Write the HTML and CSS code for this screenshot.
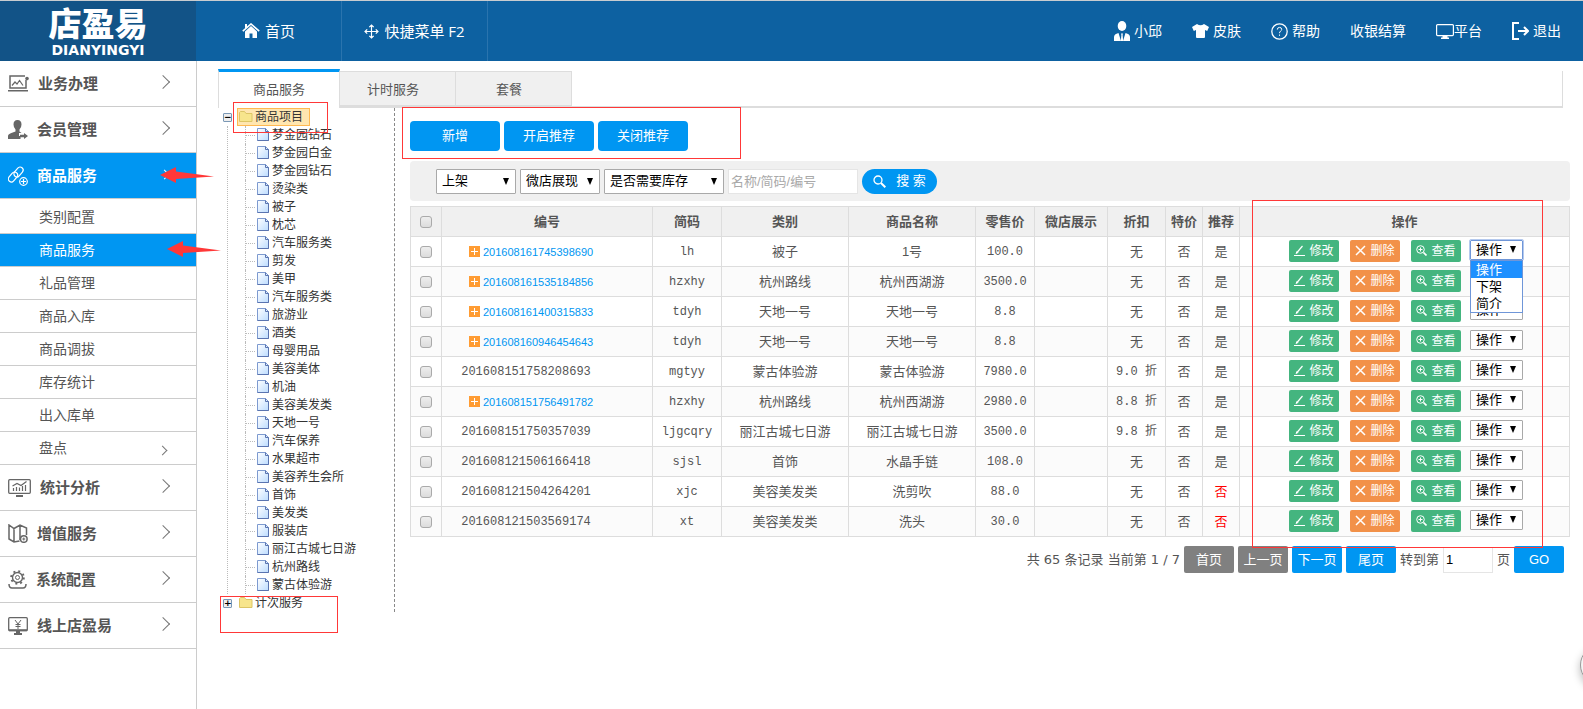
FILE: index.html
```html
<!DOCTYPE html>
<html lang="zh-CN">
<head>
  <meta charset="utf-8">
  <title>店盈易</title>
  <link rel="stylesheet" href="styles.css">
</head>
<body>
  <header class="header">
    <a href="#" class="logo">
      <span class="logo-name">店盈易</span>
      <span class="logo-pinyin">DIANYINGYI</span>
    </a>
    <nav class="nav">
      <a href="#">
        <svg width="18" height="16" viewBox="0 0 18 16"><path d="M9 3 3 8.500V15h4.500v-4.500h3V15H15V8.500z" fill="#fff"/><path d="M.8 8.200 9 1l8.200 7.200" fill="none" stroke="#fff" stroke-width="1.600"/><path d="M3 1h2v3L3 5.500z" fill="#fff"/></svg>
        首页
      </a>
      <a href="#">
        <svg width="15" height="15" viewBox="0 0 15 15" fill="none" stroke="#fff" stroke-width="1.200"><path d="M7.500 1v13M1 7.500h13M5.300 3.200l2.200-2.200 2.200 2.200M5.300 11.800l2.200 2.200 2.200-2.200M3.200 5.300 1 7.500l2.200 2.200M11.800 5.300 14 7.500l-2.200 2.200"/></svg>
        快捷菜单 F2
      </a>
    </nav>
    <nav class="user-nav">
      <a href="#">
        <svg width="16" height="20" viewBox="0 0 16 20" fill="#fff"><ellipse cx="8" cy="5" rx="4.300" ry="5"/><path d="M0 20v-4q0-3 4.500-4L7 20zM16 20v-4q0-3-4.500-4L9 20z"/><path d="M7 12.500h2l-.4 1.500.6 6H6.800l.6-6z"/></svg>
        小邱
      </a>
      <a href="#">
        <svg width="17" height="14" viewBox="0 0 17 14"><path d="M5 0q3.500 2.500 7 0l5 3-1.800 4-2.200-1v7q0 1-1 1H5q-1 0-1-1V6L1.800 7 0 3z" fill="#fff"/></svg>
        皮肤
      </a>
      <a href="#">
        <svg width="17" height="17" viewBox="0 0 17 17" fill="none" stroke="#fff" stroke-width="1.300"><circle cx="8.500" cy="8.500" r="7.700"/><path d="M6.300 6.600q0-2.200 2.200-2.200t2.200 2q0 1-1.200 1.800-1 .7-1 2M8.500 11.500v1.300" stroke-width="1"/></svg>
        帮助
      </a>
      <a href="#">收银结算</a>
      <a href="#" class="tight">
        <svg width="18" height="15" viewBox="0 0 18 15"><rect x=".6" y=".6" width="16.800" height="11" rx="1" fill="none" stroke="#fff" stroke-width="1.200"/><path d="M6.500 12h5v1.500H13V15H5v-1.500h1.500z" fill="#fff"/></svg>
        平台
      </a>
      <a href="#">
        <svg width="17" height="18" viewBox="0 0 17 18" fill="none" stroke="#fff" stroke-width="2"><path d="M7 1H1v16h6M6 9h10M12 5l4 4-4 4"/></svg>
        退出
      </a>
    </nav>
  </header>

  <div class="page">
    <aside class="sidebar">
      <ul class="menu">
        <li>
          <a href="#">
            <svg width="21" height="17" viewBox="0 0 21 17" fill="none" stroke="#666" stroke-width="1.200"><path d="M17 1H2v12h16V5M0 15.700h20" stroke-width="1.500"/><path d="m4 10.500 3-3.500 2 2L11.500 5.500 15 10.500"/><circle cx="19" cy="3.500" r="1.200" fill="#666"/></svg>
            业务办理
          </a>
        </li>
        <li>
          <a href="#">
            <svg width="20" height="19" viewBox="0 0 20 19" fill="#666"><path d="M9.500 0q4 0 4 4.500 0 3-2 5v2l2 1.500H11v3h1.500v3H0v-3q0-2 4-3.200l3.500-1.300v-2q-2-2-2-5 0-4.500 4-4.500z"/><path d="M12 14.800h4v-1.800l4 3-4 3v-1.800h-4z"/></svg>
            会员管理
          </a>
        </li>
        <li class="active">
          <a href="#">
            <svg width="20" height="20" viewBox="0 0 20 20" fill="none" stroke="#fff" stroke-width="1.200"><rect x="7.500" y=".5" width="6" height="11" rx="3" transform="rotate(40 10.500 6)"/><rect x="2" y="5.500" width="6" height="11" rx="3" transform="rotate(40 5 11)"/><circle cx="15.500" cy="15.500" r="3.800"/><path d="M15.500 13v5M13 15.500h5"/></svg>
            商品服务
          </a>
          <ul class="submenu">
            <li><a href="#">类别配置</a></li>
            <li class="current"><a href="#">商品服务</a></li>
            <li><a href="#">礼品管理</a></li>
            <li><a href="#">商品入库</a></li>
            <li><a href="#">商品调拔</a></li>
            <li><a href="#">库存统计</a></li>
            <li><a href="#">出入库单</a></li>
            <li class="has-more"><a href="#">盘点</a></li>
          </ul>
        </li>
        <li>
          <a href="#">
            <svg width="23" height="18" viewBox="0 0 23 18" fill="none" stroke="#666" stroke-width="1.300"><rect x=".7" y=".7" width="21.600" height="13.600" rx="1"/><path d="M5.500 12V9M8.500 12V8M11.500 12V8.500M14.500 12V7M17.500 12V6M4.500 7 9 4.500l4 2 5.500-4" stroke-width="1.200"/><path d="M8 17h7" stroke-width="2"/></svg>
            统计分析
          </a>
        </li>
        <li>
          <a href="#">
            <svg width="20" height="19" viewBox="0 0 20 19" fill="none" stroke="#666" stroke-width="1.500"><path d="M11.500 17 6 18 1 15V1l5 3.500L12 1l6.500 3v7M6 4.500V18M12 1v15"/><circle cx="15.800" cy="15" r="3.300"/><path d="M15.800 13.500v3M14.300 15h3" stroke-width="1"/></svg>
            增值服务
          </a>
        </li>
        <li>
          <a href="#">
            <svg width="19" height="19" viewBox="0 0 19 19" fill="none" stroke="#666"><circle cx="9.500" cy="7.500" r="5" stroke-width="1.400"/><circle cx="9.500" cy="7.500" r="6.400" stroke-width="1.800" stroke-dasharray="2 3.030"/><circle cx="9.500" cy="7.500" r="2"/><path d="M1 14q0 4 3 4h11q3 0 3-4" stroke-width="1.500"/></svg>
            系统配置
          </a>
        </li>
        <li>
          <a href="#">
            <svg width="20" height="18" viewBox="0 0 20 18" fill="none" stroke="#666" stroke-width="1.300"><rect x=".7" y=".7" width="18.600" height="13" rx="1"/><path d="M1 13.200h18" stroke-width="2"/><path d="m7 3 3 4 3-4M10 7v5M7.500 7.500h5M7.500 9.500h5" stroke-width="1"/><path d="M8 15h4M6 17h8" stroke-width="2"/></svg>
            线上店盈易
          </a>
        </li>
      </ul>
    </aside>

    <main class="main">
      <div class="tabs">
        <a href="#" class="tab active">商品服务</a>
        <a href="#" class="tab">计时服务</a>
        <a href="#" class="tab">套餐</a>
      </div>

      <div class="content">
        <div class="tree">
          <div class="mark mark-root"></div>
          <div class="node open"><span class="switch">−</span><a href="#" class="folder selected">商品项目</a></div>
          <ul class="leaves">
            <li><a href="#">梦金园钻石</a></li>
            <li><a href="#">梦金园白金</a></li>
            <li><a href="#">梦金园钻石</a></li>
            <li><a href="#">烫染类</a></li>
            <li><a href="#">被子</a></li>
            <li><a href="#">枕芯</a></li>
            <li><a href="#">汽车服务类</a></li>
            <li><a href="#">剪发</a></li>
            <li><a href="#">美甲</a></li>
            <li><a href="#">汽车服务类</a></li>
            <li><a href="#">旅游业</a></li>
            <li><a href="#">酒类</a></li>
            <li><a href="#">母婴用品</a></li>
            <li><a href="#">美容美体</a></li>
            <li><a href="#">机油</a></li>
            <li><a href="#">美容美发类</a></li>
            <li><a href="#">天地一号</a></li>
            <li><a href="#">汽车保养</a></li>
            <li><a href="#">水果超市</a></li>
            <li><a href="#">美容养生会所</a></li>
            <li><a href="#">首饰</a></li>
            <li><a href="#">美发类</a></li>
            <li><a href="#">服装店</a></li>
            <li><a href="#">丽江古城七日游</a></li>
            <li><a href="#">杭州路线</a></li>
            <li><a href="#">蒙古体验游</a></li>
          </ul>
          <div class="node"><span class="switch">+</span><a href="#" class="folder">计次服务</a>
            <div class="mark mark-second"></div>
          </div>
        </div>

        <div class="list">
          <div class="toolbar">
            <button class="btn">新增</button>
            <button class="btn">开启推荐</button>
            <button class="btn">关闭推荐</button>
            <div class="mark mark-toolbar"></div>
          </div>

          <form class="search" onsubmit="return false">
            <select class="select" aria-label="状态"><option>上架</option></select>
            <select class="select" aria-label="微店"><option>微店展现</option></select>
            <select class="select wide" aria-label="库存"><option>是否需要库存</option></select>
            <input type="text" class="keyword" placeholder="名称/简码/编号" aria-label="关键字">
            <button class="search-btn">
              <svg width="13" height="13" viewBox="0 0 13 13" fill="none" stroke="#fff"><circle cx="5" cy="5" r="4" stroke-width="1.300"/><path d="m8 8 4.300 4.300" stroke-width="2"/></svg>
              搜 索
            </button>
          </form>

          <div class="table-wrap">
            <table>
              <colgroup>
                <col class="c-check"><col class="c-code"><col class="c-short"><col class="c-name"><col class="c-name"><col class="c-price"><col class="c-shop"><col class="c-discount"><col class="c-flag"><col class="c-flag"><col>
              </colgroup>
              <thead>
                <tr><th><input type="checkbox" aria-label="全选"></th><th>编号</th><th>简码</th><th>类别</th><th>商品名称</th><th>零售价</th><th>微店展示</th><th>折扣</th><th>特价</th><th>推荐</th><th>操作</th></tr>
              </thead>
              <tbody>
                <tr>
                  <td><input type="checkbox" aria-label="选择"></td>
                  <td><a href="#" class="code">201608161745398690</a></td>
                  <td class="mono">lh</td><td>被子</td><td>1号</td><td class="mono">100.0</td><td></td><td>无</td><td>否</td><td>是</td>
                  <td>
                    <div class="actions">
                      <button class="act edit">修改</button><button class="act del">删除</button><button class="act view">查看</button>
                      <div class="dropdown">
                        <select class="select small focus" aria-label="操作"><option>操作</option></select>
                        <ul class="options"><li class="on">操作</li><li>下架</li><li>简介</li></ul>
                      </div>
                    </div>
                  </td>
                </tr>
                <tr>
                  <td><input type="checkbox" aria-label="选择"></td>
                  <td><a href="#" class="code">201608161535184856</a></td>
                  <td class="mono">hzxhy</td><td>杭州路线</td><td>杭州西湖游</td><td class="mono">3500.0</td><td></td><td>无</td><td>否</td><td>是</td>
                  <td><div class="actions"><button class="act edit">修改</button><button class="act del">删除</button><button class="act view">查看</button><select class="select small" aria-label="操作"><option>操作</option></select></div></td>
                </tr>
                <tr>
                  <td><input type="checkbox" aria-label="选择"></td>
                  <td><a href="#" class="code">201608161400315833</a></td>
                  <td class="mono">tdyh</td><td>天地一号</td><td>天地一号</td><td class="mono">8.8</td><td></td><td>无</td><td>否</td><td>是</td>
                  <td><div class="actions"><button class="act edit">修改</button><button class="act del">删除</button><button class="act view">查看</button><select class="select small" aria-label="操作"><option>操作</option></select></div></td>
                </tr>
                <tr>
                  <td><input type="checkbox" aria-label="选择"></td>
                  <td><a href="#" class="code">201608160946454643</a></td>
                  <td class="mono">tdyh</td><td>天地一号</td><td>天地一号</td><td class="mono">8.8</td><td></td><td>无</td><td>否</td><td>是</td>
                  <td><div class="actions"><button class="act edit">修改</button><button class="act del">删除</button><button class="act view">查看</button><select class="select small" aria-label="操作"><option>操作</option></select></div></td>
                </tr>
                <tr>
                  <td><input type="checkbox" aria-label="选择"></td>
                  <td class="mono plain">201608151758208693</td>
                  <td class="mono">mgtyy</td><td>蒙古体验游</td><td>蒙古体验游</td><td class="mono">7980.0</td><td></td><td class="mono">9.0 折</td><td>否</td><td>是</td>
                  <td><div class="actions"><button class="act edit">修改</button><button class="act del">删除</button><button class="act view">查看</button><select class="select small" aria-label="操作"><option>操作</option></select></div></td>
                </tr>
                <tr>
                  <td><input type="checkbox" aria-label="选择"></td>
                  <td><a href="#" class="code">201608151756491782</a></td>
                  <td class="mono">hzxhy</td><td>杭州路线</td><td>杭州西湖游</td><td class="mono">2980.0</td><td></td><td class="mono">8.8 折</td><td>否</td><td>是</td>
                  <td><div class="actions"><button class="act edit">修改</button><button class="act del">删除</button><button class="act view">查看</button><select class="select small" aria-label="操作"><option>操作</option></select></div></td>
                </tr>
                <tr>
                  <td><input type="checkbox" aria-label="选择"></td>
                  <td class="mono plain">201608151750357039</td>
                  <td class="mono">ljgcqry</td><td>丽江古城七日游</td><td>丽江古城七日游</td><td class="mono">3500.0</td><td></td><td class="mono">9.8 折</td><td>否</td><td>是</td>
                  <td><div class="actions"><button class="act edit">修改</button><button class="act del">删除</button><button class="act view">查看</button><select class="select small" aria-label="操作"><option>操作</option></select></div></td>
                </tr>
                <tr>
                  <td><input type="checkbox" aria-label="选择"></td>
                  <td class="mono plain">201608121506166418</td>
                  <td class="mono">sjsl</td><td>首饰</td><td>水晶手链</td><td class="mono">108.0</td><td></td><td>无</td><td>否</td><td>是</td>
                  <td><div class="actions"><button class="act edit">修改</button><button class="act del">删除</button><button class="act view">查看</button><select class="select small" aria-label="操作"><option>操作</option></select></div></td>
                </tr>
                <tr>
                  <td><input type="checkbox" aria-label="选择"></td>
                  <td class="mono plain">201608121504264201</td>
                  <td class="mono">xjc</td><td>美容美发类</td><td>洗剪吹</td><td class="mono">88.0</td><td></td><td>无</td><td>否</td><td class="no">否</td>
                  <td><div class="actions"><button class="act edit">修改</button><button class="act del">删除</button><button class="act view">查看</button><select class="select small" aria-label="操作"><option>操作</option></select></div></td>
                </tr>
                <tr>
                  <td><input type="checkbox" aria-label="选择"></td>
                  <td class="mono plain">201608121503569174</td>
                  <td class="mono">xt</td><td>美容美发类</td><td>洗头</td><td class="mono">30.0</td><td></td><td>无</td><td>否</td><td class="no">否</td>
                  <td><div class="actions"><button class="act edit">修改</button><button class="act del">删除</button><button class="act view">查看</button><select class="select small" aria-label="操作"><option>操作</option></select></div></td>
                </tr>
              </tbody>
            </table>
            <div class="mark mark-actions"></div>
          </div>

          <div class="pager">
            <span class="total">共 65 条记录 当前第 1 / 7</span>
            <button class="page-btn off">首页</button>
            <button class="page-btn off">上一页</button>
            <button class="page-btn">下一页</button>
            <button class="page-btn">尾页</button>
            <label for="pageNo">转到第</label>
            <input type="text" id="pageNo" value="1">
            <span>页</span>
            <button class="page-btn">GO</button>
          </div>
        </div>
      </div>
    </main>
  </div>

  <svg class="arrow arrow-menu" width="54" height="16" viewBox="0 0 54 16"><path d="M0 8 16 0v4.500L54 9.500 16 12v4z" fill="#ff3838"/></svg>
  <svg class="arrow arrow-submenu" width="54" height="16" viewBox="0 0 54 16"><path d="M0 8 16 0v4.500L54 9.500 16 12v4z" fill="#ff3838"/></svg>
  <div class="float-ball"></div>
</body>
</html>
```
FILE: styles.css
```css
* {
  box-sizing: border-box;
}

body {
  margin: 0;
  min-height: 100vh;
  display: flex;
  flex-direction: column;
  position: relative;
  overflow-x: hidden;
  background: #fff;
  border-top: 1px solid #c8ccd0;
  font: 13px/20px "Liberation Sans", "Noto Sans CJK SC", sans-serif;
  color: #555;
}

a {
  color: inherit;
  text-decoration: none;
}

ul {
  list-style: none;
  margin: 0;
  padding: 0;
}

button, input, select {
  font: inherit;
  margin: 0;
}

button {
  border: none;
  padding: 0;
  color: #fff;
  cursor: pointer;
}

/* header */
.header {
  display: flex;
  height: 60px;
  background: #0d61a1;
  color: #fff;
}

.logo {
  width: 196px;
  background: #125387;
  display: flex;
  flex-direction: column;
  align-items: center;
  padding-top: 7px;
}

.logo-name {
  font-size: 33px;
  line-height: 33px;
  font-weight: 900;
}

.logo-pinyin {
  margin-top: 2px;
  font: bold 14px/14px "DejaVu Sans", sans-serif;
}

.nav {
  display: flex;
  font-family: "Open Sans", "Noto Sans CJK SC", sans-serif;
  font-size: 15px;
}

.nav a {
  width: 146px;
  display: flex;
  align-items: center;
  justify-content: center;
  gap: 5px;
  border-right: 1px solid #2a74ae;
}

.user-nav {
  margin-left: auto;
  padding-right: 22px;
  display: flex;
  gap: 30px;
  font-size: 14px;
}

.user-nav a {
  display: flex;
  align-items: center;
  gap: 4px;
}

.user-nav .tight {
  gap: 0;
}

/* left menu */
.page {
  flex: 1;
  display: flex;
}

.sidebar {
  width: 197px;
  flex: none;
  border-right: 1px solid #ccc;
}

.menu > li > a {
  display: flex;
  align-items: center;
  gap: 9px;
  height: 46px;
  padding: 0 25px 0 8px;
  border-bottom: 1px solid #ccc;
  font-size: 15px;
  font-weight: bold;
}

.menu > li > a::after,
.has-more a::after {
  content: "";
  width: 9px;
  height: 9px;
  margin: 0 3px 3px auto;
  border: solid #777;
  border-width: 1px 1px 0 0;
  transform: rotate(45deg);
}

.menu > .active > a {
  background: #0096f2;
  color: #fff;
}

.menu > .active > a::after {
  width: 6px;
  height: 6px;
  border-color: #fff;
}

.submenu {
  padding-top: 2px;
}

.submenu a {
  display: flex;
  align-items: center;
  height: 33px;
  padding: 0 25px 0 39px;
  border-bottom: 1px solid #ccc;
  font-size: 14px;
}

.submenu .current a {
  background: #0096f2;
  color: #fff;
}

.has-more a::after {
  width: 6px;
  height: 6px;
  margin: 4px 5px 0 auto;
}

/* tabs */
.main {
  flex: 1;
  min-width: 0;
  padding: 10px 13px 0 21px;
}

.tabs {
  display: flex;
  height: 37px;
  margin-right: 7px;
  border-right: 1px solid #ddd;
  border-bottom: 2px solid #ddd;
}

.tab {
  width: 116px;
  padding-right: 9px;
  border: 1px solid #ddd;
  border-left: none;
  background: #f0f0f0;
  text-align: center;
  line-height: 36px;
}

.tab.active {
  width: 122px;
  margin: -2px 0;
  padding-right: 0;
  border-left: 1px solid #ddd;
  border-top: 3px solid #0096f2;
  border-bottom: none;
  background: #fff;
}

.content {
  display: flex;
  align-items: flex-start;
}

/* category tree */
.tree {
  position: relative;
  width: 177px;
  flex: none;
  padding-left: 5px;
  border-right: 1px dashed #888;
  font-size: 12px;
  line-height: 18px;
  color: #333;
}

.node {
  position: relative;
  display: flex;
  align-items: center;
  height: 18px;
}

.switch {
  width: 9px;
  height: 9px;
  border: 1px solid #7b98b5;
  border-radius: 1px;
  background: #eee;
  color: #000;
  font: bold 9px/7px "DejaVu Sans", sans-serif;
  text-align: center;
}

.folder {
  display: flex;
  align-items: center;
  height: 18px;
  margin-left: 5px;
  padding: 0 1px;
}

.folder.selected {
  padding: 0 6px 0 0;
  background: #ffe6b0;
  border: 1px solid #ffb951;
}

.folder::before {
  content: "";
  width: 17px;
  height: 14px;
  background: url("data:image/svg+xml,%3Csvg xmlns='http://www.w3.org/2000/svg' width='17' height='14'%3E%3Cpath d='M1.500 11.500v-9l1-1h4l1.500 2h6v8z' fill='%23f7e58c' stroke='%23dcc566'/%3E%3C/svg%3E") no-repeat;
}

.leaves {
  margin-left: 4px;
  padding-left: 17px;
  border-left: 1px dotted #bbb;
}

.leaves li {
  position: relative;
  height: 18px;
  padding-left: 11px;
  border-left: 1px dotted #bbb;
}

.leaves li::before {
  content: "";
  position: absolute;
  left: 0;
  top: 9px;
  width: 9px;
  border-top: 1px dotted #bbb;
}

.leaves a {
  display: flex;
  align-items: center;
}

.leaves a::before {
  content: "";
  width: 15px;
  height: 16px;
  background: url("data:image/svg+xml,%3Csvg xmlns='http://www.w3.org/2000/svg' width='13' height='16'%3E%3ClinearGradient id='g' x2='1' y2='1'%3E%3Cstop stop-color='%23fff'/%3E%3Cstop offset='1' stop-color='%23bcdcff'/%3E%3C/linearGradient%3E%3Cpath d='M.5 1.500h8l3 3v9H.5z' fill='url(%23g)' stroke='%237d9ad0'/%3E%3Cpath d='M8.500 1.500v3h3v9H.5' fill='none' stroke='%235a74b0'/%3E%3C/svg%3E") no-repeat;
}

/* list */
.list {
  flex: 1;
  min-width: 0;
  padding: 13px 0 0 15px;
}

.toolbar {
  position: relative;
  display: flex;
  gap: 4px;
}

.btn {
  width: 90px;
  height: 30px;
  border-radius: 4px;
  background: #0096f2;
}

.search {
  display: flex;
  align-items: center;
  gap: 4px;
  height: 40px;
  margin: 10px 0 5px;
  padding-left: 26px;
  border-radius: 4px;
  background: #f0f0f0;
}

.select {
  appearance: none;
  width: 80px;
  height: 25px;
  padding: 0 0 0 5px;
  border: 1px solid #a9a9a9;
  border-radius: 1px;
  color: #000;
  line-height: 20px;
  background: #fff url("data:image/svg+xml,%3Csvg xmlns='http://www.w3.org/2000/svg' width='6' height='7'%3E%3Cpath d='M0 0h6L3 7z'/%3E%3C/svg%3E") no-repeat right 6px center;
}

.select.wide {
  width: 120px;
}

.keyword {
  width: 130px;
  height: 25px;
  padding: 0 2px;
  border: 1px solid #e5e5e5;
}

.keyword::placeholder {
  color: #a9a9a9;
}

.search-btn {
  display: flex;
  align-items: center;
  justify-content: center;
  gap: 10px;
  width: 75px;
  height: 25px;
  border-radius: 13px;
  background: #0096f2;
}

.table-wrap {
  position: relative;
}

table {
  width: 100%;
  table-layout: fixed;
  border-collapse: collapse;
}

.c-check { width: 31px; }
.c-code { width: 211px; }
.c-short { width: 69px; }
.c-name { width: 127px; }
.c-price { width: 59px; }
.c-shop { width: 73px; }
.c-discount { width: 58px; }
.c-flag { width: 37px; }

th, td {
  height: 30px;
  padding: 0;
  border: 1px solid #ddd;
  text-align: center;
}

th {
  background: #f0f0f0;
}

tbody tr:nth-child(even) {
  background: #fbfbfb;
}

.mono {
  font-family: "Liberation Mono", "Noto Sans CJK SC", monospace;
  font-size: 12px;
}

.plain {
  padding-right: 42px;
}

.no {
  color: #f00;
}

input[type="checkbox"] {
  appearance: none;
  display: block;
  width: 12px;
  height: 12px;
  margin: 0 auto;
  border: 1px solid #aaa;
  border-radius: 3px;
  background: linear-gradient(#eee, #dcdcdc);
}

.code {
  display: flex;
  align-items: center;
  gap: 3px;
  padding-left: 27px;
  font-size: 11px;
  color: #0096f2;
}

.code::before {
  content: "";
  width: 11px;
  height: 11px;
  background: linear-gradient(#fff, #fff) center / 7px 1px no-repeat, linear-gradient(#fff, #fff) center / 1px 7px no-repeat, #ff9c33;
}

.actions {
  display: flex;
  justify-content: center;
  align-items: flex-start;
  height: 24px;
  padding-left: 3px;
}

.act {
  width: 50px;
  height: 22px;
  margin-right: 11px;
  display: flex;
  align-items: center;
  justify-content: center;
  gap: 4px;
  border-radius: 2px;
  background: #44b57f;
  font-size: 12px;
}

.act.view {
  margin-right: 9px;
}

.act::before {
  content: "";
  width: 11px;
  height: 11px;
}

.edit::before {
  background: url("data:image/svg+xml,%3Csvg xmlns='http://www.w3.org/2000/svg' width='11' height='11' fill='none' stroke='%23fff'%3E%3Cpath d='M0 10.500h11M3 7.500 8.500 1' stroke-width='1.200'/%3E%3Cpath d='m2 8.500 1-2 1 1z'/%3E%3C/svg%3E") no-repeat;
}

.del {
  background: #f29149;
}

.del::before {
  background: url("data:image/svg+xml,%3Csvg xmlns='http://www.w3.org/2000/svg' width='11' height='11' fill='none' stroke='%23fff' stroke-width='1.500'%3E%3Cpath d='m1 1 9 9M10 1l-9 9'/%3E%3C/svg%3E") no-repeat;
}

.view::before {
  background: url("data:image/svg+xml,%3Csvg xmlns='http://www.w3.org/2000/svg' width='11' height='11' fill='none' stroke='%23fff'%3E%3Ccircle cx='4.500' cy='4.500' r='3.800'/%3E%3Cpath d='M4.500 2.500v4M2.500 4.500h4'/%3E%3Cpath d='m7.500 7.500 3 3' stroke-width='1.700'/%3E%3C/svg%3E") no-repeat;
}

.select.small {
  display: block;
  width: 53px;
  height: 20px;
  line-height: 18px;
}

.dropdown {
  position: relative;
  width: 53px;
}

.select.focus {
  border-color: #6f96d8;
  outline: 1px solid #b4c9ee;
}

.options {
  position: absolute;
  z-index: 1;
  top: 20px;
  left: 0;
  width: 53px;
  border: 1px solid #6f96d8;
  background: #fff;
  color: #000;
  text-align: left;
}

.options li {
  height: 17px;
  padding-left: 5px;
  line-height: 17px;
}

.options .on {
  background: #1e90ff;
  color: #fff;
}

/* pager */
.pager {
  display: flex;
  justify-content: flex-end;
  align-items: center;
  gap: 4px;
  margin-top: 9px;
  padding-right: 6px;
}

.total {
  font-family: "DejaVu Sans", "Noto Sans CJK SC", sans-serif;
}

.page-btn {
  width: 50px;
  height: 27px;
  border-radius: 2px;
  background: #0096f2;
}

.page-btn.off {
  background: #808080;
}

.pager input {
  width: 50px;
  height: 26px;
  padding: 0 2px;
  border: 1px solid #e5e5e5;
}

/* red marks */
.mark {
  position: absolute;
  z-index: 2;
  border: 1px solid #ff3838;
  pointer-events: none;
}

.mark-root {
  left: 15px;
  top: -6px;
  width: 95px;
  height: 31px;
}

.mark-second {
  left: -3px;
  top: 2px;
  width: 118px;
  height: 37px;
}

.mark-toolbar {
  left: -8px;
  top: -14px;
  width: 339px;
  height: 52px;
}

.mark-actions {
  right: 27px;
  top: -6px;
  width: 291px;
  height: 348px;
}

.arrow {
  position: absolute;
}

.arrow-menu {
  left: 160px;
  top: 166px;
}

.arrow-submenu {
  left: 167px;
  top: 240px;
}

.float-ball {
  position: fixed;
  right: -37px;
  bottom: 24px;
  width: 40px;
  height: 40px;
  border: 1px solid #999;
  border-radius: 50%;
  background: #f4f4f4;
  box-shadow: 0 4px 8px #bbb;
}
```
